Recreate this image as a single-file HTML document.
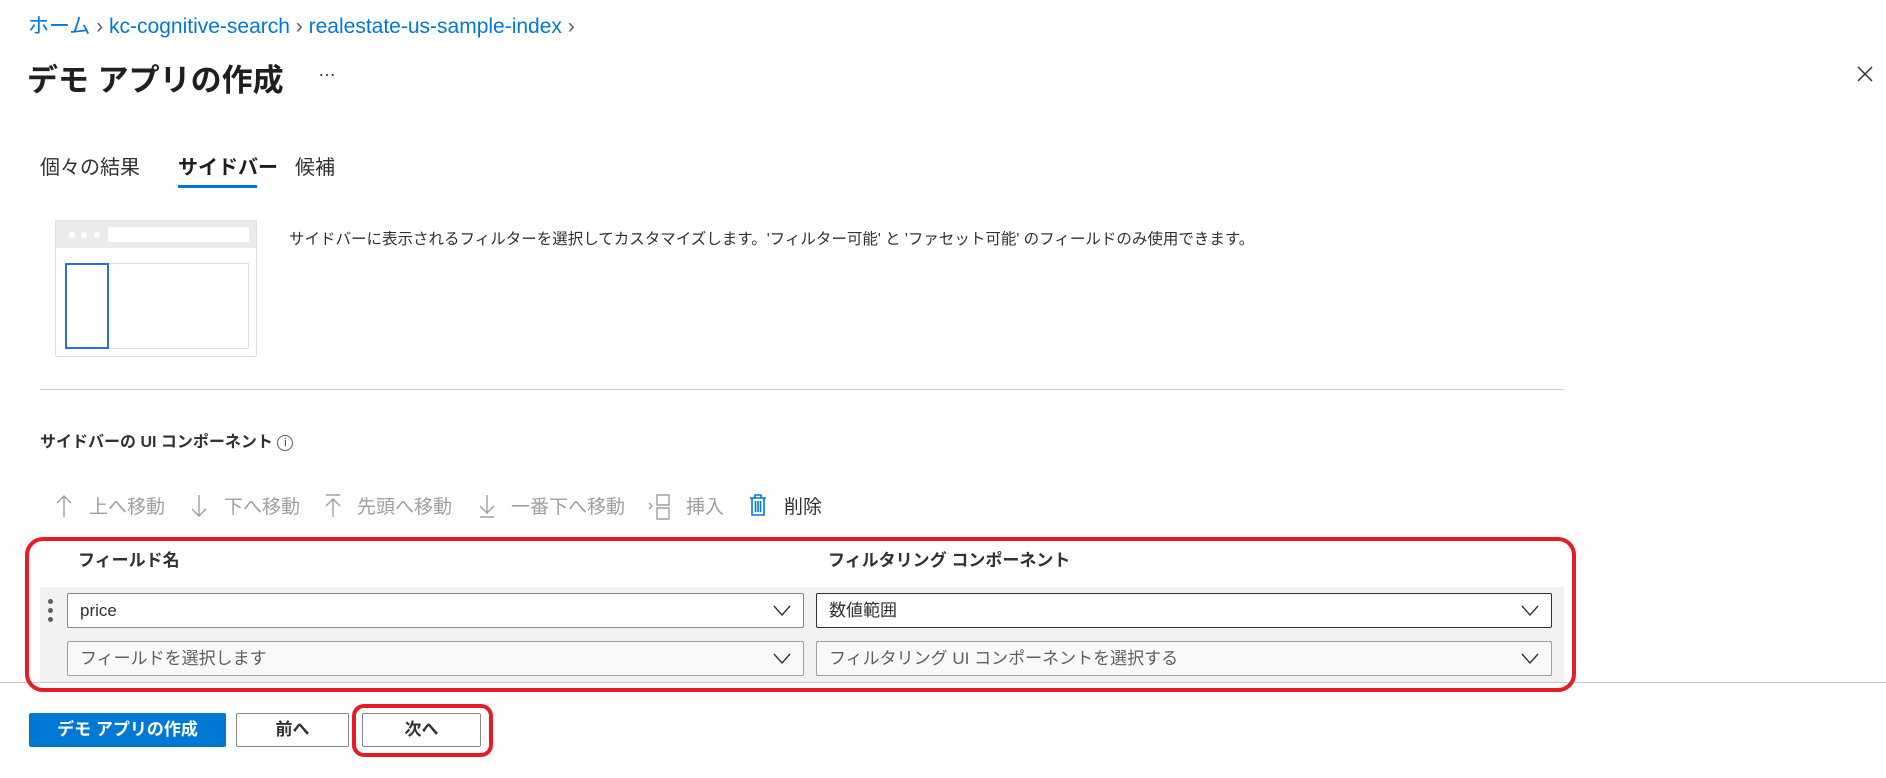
<!DOCTYPE html>
<html><head><meta charset="utf-8"><style>
*{box-sizing:border-box;margin:0;padding:0}
body{width:1886px;height:778px;background:#fff;position:relative;overflow:hidden;font-family:"Liberation Sans","Noto Sans CJK JP",sans-serif;color:#323130}
.a{position:absolute;white-space:nowrap}
.bc{color:#0078d4;font-size:21px;top:10px}
.inp{position:absolute;height:35px;border:1px solid #8a8886;border-radius:2px;background:#fff;font-size:17px;line-height:33px;padding-left:12px}
.inp svg{position:absolute;right:12px;top:11px}
.tb{color:#a19f9d;font-size:19px;top:492px}
.ic{position:absolute;top:494px}
.btn{position:absolute;top:713px;height:34px;border:1px solid #8a8886;border-radius:2px;font-size:17px;font-weight:bold;text-align:center;line-height:32px;background:#fff}
</style></head><body>
<div class="a bc" style="left:28px">ホーム <span style="color:#605e5c">&#8250;</span> kc-cognitive-search <span style="color:#605e5c">&#8250;</span> realestate-us-sample-index <span style="color:#605e5c">&#8250;</span></div>
<div class="a" style="left:27px;top:55px;font-size:31px;font-weight:bold;color:#201f1e">デモ アプリの作成</div>
<div class="a" style="left:318px;top:60px;font-size:18px">…</div>
<svg class="a" style="left:1857px;top:66px" width="16" height="16"><path d="M1 1L15 15M15 1L1 15" stroke="#323130" stroke-width="1.5"/></svg>
<div class="a" style="left:40px;top:151px;font-size:20px">個々の結果</div>
<div class="a" style="left:178px;top:151px;font-size:20px;font-weight:bold;color:#201f1e">サイドバー</div>
<div class="a" style="left:178px;top:185px;width:79px;height:3px;background:#0078d4"></div>
<div class="a" style="left:295px;top:151px;font-size:20px">候補</div>
<div class="a" style="left:55px;top:220px;width:202px;height:137px;border:1px solid #e1dfdd;border-radius:2px;background:#fff">
 <div style="height:27px;background:#edebe9;position:relative">
  <div style="position:absolute;left:13px;top:11px;width:6px;height:6px;border-radius:3px;background:#fff"></div>
  <div style="position:absolute;left:25px;top:11px;width:6px;height:6px;border-radius:3px;background:#fff"></div>
  <div style="position:absolute;left:38px;top:11px;width:6px;height:6px;border-radius:3px;background:#fff"></div>
  <div style="position:absolute;left:52px;top:6px;width:141px;height:15px;background:#fff"></div>
 </div>
 <div style="position:absolute;left:9px;top:42px;width:184px;height:86px;border:1px solid #e1dfdd"></div>
 <div style="position:absolute;left:9px;top:42px;width:44px;height:86px;border:2px solid #2b6fd6"></div>
</div>
<div class="a" style="left:289px;top:227px;font-size:15.5px">サイドバーに表示されるフィルターを選択してカスタマイズします。'フィルター可能' と 'ファセット可能' のフィールドのみ使用できます。</div>
<div class="a" style="left:40px;top:389px;width:1524px;height:1px;background:#d2d0ce"></div>
<div class="a" style="left:40px;top:428px;font-size:16px;font-weight:bold">サイドバーの UI コンポーネント <span style="display:inline-block;width:16px;height:16px;border:1px solid #605e5c;border-radius:50%;font-size:11px;font-weight:normal;text-align:center;line-height:14px;vertical-align:1px">i</span></div>
<svg class="ic" style="left:56px" width="16" height="24"><path d="M8 23V2M1 9L8 2L15 9" stroke="#a19f9d" stroke-width="1.4" fill="none"/></svg>
<div class="a tb" style="left:89px">上へ移動</div>
<svg class="ic" style="left:191px" width="16" height="24"><path d="M8 1V22M1 15L8 22L15 15" stroke="#a19f9d" stroke-width="1.4" fill="none"/></svg>
<div class="a tb" style="left:224px">下へ移動</div>
<svg class="ic" style="left:325px" width="16" height="24"><path d="M1 1H15M8 23V5M1 12L8 5L15 12" stroke="#a19f9d" stroke-width="1.4" fill="none"/></svg>
<div class="a tb" style="left:357px">先頭へ移動</div>
<svg class="ic" style="left:479px" width="16" height="24"><path d="M1 23H15M8 1V19M1 12L8 19L15 12" stroke="#a19f9d" stroke-width="1.4" fill="none"/></svg>
<div class="a tb" style="left:511px">一番下へ移動</div>
<svg class="ic" style="left:648px" width="24" height="26"><path d="M1 9L4 12L1 15M9 1H21V11H9ZM9 14H21V25H9Z" stroke="#a19f9d" stroke-width="1.4" fill="none"/></svg>
<div class="a tb" style="left:686px">挿入</div>
<svg class="a" style="left:749px;top:494px" width="18" height="22"><path d="M1 4H17M6 4V1H12V4M3 4V21H15V4M6.5 7V18M9 7V18M11.5 7V18" stroke="#0078d4" stroke-width="1.6" fill="none"/></svg>
<div class="a" style="left:784px;top:492px;font-size:19px;color:#323130">削除</div>
<div class="a" style="left:78px;top:546px;font-size:17px;font-weight:bold">フィールド名</div>
<div class="a" style="left:828px;top:546px;font-size:17px;font-weight:bold">フィルタリング コンポーネント</div>
<div class="a" style="left:40px;top:587px;width:1524px;height:95px;background:#f3f2f1"></div>
<div class="a" style="left:48px;top:599px;width:6px;height:24px">
 <div style="width:5px;height:5px;border-radius:3px;background:#605e5c;margin-bottom:4px"></div><div style="width:5px;height:5px;border-radius:3px;background:#605e5c;margin-bottom:4px"></div><div style="width:5px;height:5px;border-radius:3px;background:#605e5c"></div></div>
<div class="inp" style="left:67px;top:593px;width:737px">price<svg width="18" height="12"><path d="M1 1L9 10L17 1" stroke="#323130" stroke-width="1.4" fill="none"/></svg></div>
<div class="inp" style="left:816px;top:593px;width:736px;border-color:#323130">数値範囲<svg width="18" height="12"><path d="M1 1L9 10L17 1" stroke="#323130" stroke-width="1.4" fill="none"/></svg></div>
<div class="inp" style="left:67px;top:641px;width:737px;background:#faf9f8;color:#605e5c;border-color:#a19f9d">フィールドを選択します<svg width="18" height="12"><path d="M1 1L9 10L17 1" stroke="#323130" stroke-width="1.4" fill="none"/></svg></div>
<div class="inp" style="left:816px;top:641px;width:736px;background:#faf9f8;color:#605e5c;border-color:#a19f9d">フィルタリング UI コンポーネントを選択する<svg width="18" height="12"><path d="M1 1L9 10L17 1" stroke="#323130" stroke-width="1.4" fill="none"/></svg></div>
<div class="a" style="left:0;top:682px;width:1886px;height:1px;background:#c8c6c4"></div>
<div class="a" style="left:25px;top:537px;width:1551px;height:155px;border:4px solid #e81c24;border-radius:18px"></div>
<div class="btn" style="left:29px;width:197px;background:#0078d4;border-color:#0078d4;color:#fff">デモ アプリの作成</div>
<div class="btn" style="left:236px;width:113px">前へ</div>
<div class="btn" style="left:362px;width:119px">次へ</div>
<div class="a" style="left:352px;top:704px;width:141px;height:53px;border:4px solid #e81c24;border-radius:12px"></div>
</body></html>
